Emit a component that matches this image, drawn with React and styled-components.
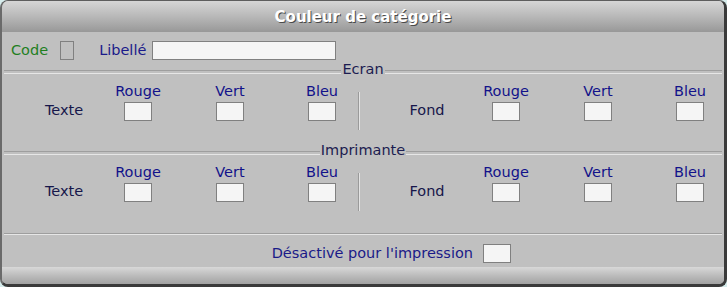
import React from "react";
import styled, { createGlobalStyle } from "styled-components";

const Global = createGlobalStyle`
  html, body { margin: 0; padding: 0; background: #d6ecec; }
  body { font-family: "DejaVu Sans", "Liberation Sans", sans-serif; font-size: 14.5px; }
  * { box-sizing: border-box; }
`;

const Frame = styled.div`
  width: 727px;
  height: 287px;
  display: flex;
  flex-direction: column;
  border-top: 1px solid #5e5e5e;
  border-left: 2px solid #6a6a6a;
  border-right: 3px solid #3a3a3a;
  border-bottom: 3px solid #3a3a3a;
  border-radius: 8px;
  overflow: hidden;
  background: #c0c0c0;
`;

const TitleBar = styled.div`
  height: 31px;
  padding-top: 2px;
  line-height: 29px;
  text-align: center;
  background: linear-gradient(to bottom, #d6d6d6 0%, #b8b8b8 50%, #989898 100%);
  color: #ffffff;
  font-weight: bold;
  font-size: 15px;
  text-shadow: 1px 1px 0 #4a4a4a;
`;

const Body = styled.div`
  flex: 1;
  display: flex;
  flex-direction: column;
  padding: 9px 0 4px;
  background: #c0c0c0;
`;

const BottomBar = styled.div`
  height: 17px;
  background: linear-gradient(to bottom, #d8d8d8 0%, #bcbcbc 50%, #a2a2a2 100%);
`;

const CodeRow = styled.div`
  display: flex;
  align-items: center;
  height: 19px;
  padding-left: 9px;
  line-height: 19px;
`;

const FieldLabel = styled.span`
  color: ${(p) => p.$color};
  margin-right: ${(p) => p.$gap}px;
  margin-left: ${(p) => p.$ml || 0}px;
  white-space: nowrap;
`;

const Box = styled.div`
  width: ${(p) => p.$w}px;
  height: 19px;
  border: 1px solid #808080;
  background: ${(p) => (p.$disabled ? "#c0c0c0" : "#f5f5f5")};
  flex-shrink: 0;
`;

const Header = styled.div`
  display: flex;
  align-items: flex-start;
  height: 16px;
  margin: ${(p) => p.$mt}px 2px 0;
  line-height: 16px;
  color: #1c1c50;

  &::before,
  &::after {
    content: "";
    flex: 1;
    margin-top: 9px;
    height: 2px;
    border-top: 1px solid #9e9e9e;
    border-bottom: 1px solid #e6e6e6;
  }
`;

const HeaderText = styled.span`
  padding: 0 1px;
`;

const Separator = styled.div`
  height: 2px;
  margin: 10px 2px 0;
  border-top: 1px solid #9e9e9e;
  border-bottom: 1px solid #e6e6e6;
`;

const Section = styled.div`
  display: flex;
  align-items: flex-start;
  height: 65px;
  padding-top: 6px;
`;

const Half = styled.div`
  display: flex;
  align-items: flex-start;
  padding-left: ${(p) => p.$pad}px;
  gap: 28px;
`;

const RowLabel = styled.div`
  width: ${(p) => p.$w}px;
  margin-right: ${(p) => p.$gap - 28}px;
  margin-top: 19px;
  line-height: 16px;
  text-align: center;
  color: #16164a;
`;

const Cell = styled.div`
  width: 64px;
  display: flex;
  flex-direction: column;
  align-items: center;
`;

const ChannelLabel = styled.div`
  line-height: 16px;
  margin-bottom: 3px;
  color: #12128a;
`;

const Divider = styled.div`
  width: 2px;
  height: 38px;
  margin: 9px 0 0 4px;
  border-left: 1px solid #9a9a9a;
  border-right: 1px solid #e4e4e4;
`;

const LastRow = styled.div`
  display: flex;
  justify-content: flex-end;
  align-items: center;
  height: 19px;
  margin-top: 9px;
  padding-right: 213px;
  line-height: 19px;
`;

const channels = ["Rouge", "Vert", "Bleu"];

function ColorGroup({ label, pad, labelW, labelGap }) {
  return (
    <Half $pad={pad}>
      <RowLabel $w={labelW} $gap={labelGap}>
        {label}
      </RowLabel>
      {channels.map((c) => (
        <Cell key={c}>
          <ChannelLabel>{c}</ChannelLabel>
          <Box $w={28} />
        </Cell>
      ))}
    </Half>
  );
}

function ColorSection() {
  return (
    <Section>
      <ColorGroup label="Texte" pad={26} labelW={72} labelGap={6} />
      <Divider />
      <ColorGroup label="Fond" pad={32} labelW={70} labelGap={12} />
    </Section>
  );
}

export default function App() {
  return (
    <>
      <Global />
      <Frame>
        <TitleBar>Couleur de catégorie</TitleBar>
        <Body>
          <CodeRow>
            <FieldLabel $color="#1f7f1f" $gap={12}>Code</FieldLabel>
            <Box $w={14} $disabled />
            <FieldLabel $color="#1a1a8a" $gap={6} $ml={25}>
              Libellé
            </FieldLabel>
            <Box $w={184} />
          </CodeRow>
          <Header $mt={1}>
            <HeaderText>Ecran</HeaderText>
          </Header>
          <ColorSection />
          <Header $mt={0}>
            <HeaderText>Imprimante</HeaderText>
          </Header>
          <ColorSection />
          <Separator />
          <LastRow>
            <FieldLabel $color="#1a1a88" $gap={10}>Désactivé pour l'impression</FieldLabel>
            <Box $w={28} />
          </LastRow>
        </Body>
        <BottomBar />
      </Frame>
    </>
  );
}
